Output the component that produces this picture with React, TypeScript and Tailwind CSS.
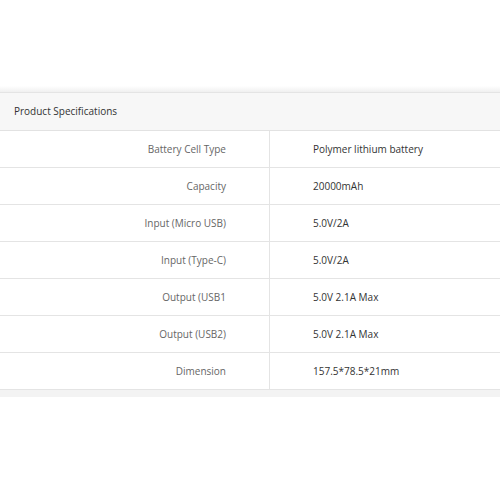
const specs = [
  { label: "Battery Cell Type", value: "Polymer lithium battery" },
  { label: "Capacity", value: "20000mAh" },
  { label: "Input (Micro USB)", value: "5.0V/2A" },
  { label: "Input (Type-C)", value: "5.0V/2A" },
  { label: "Output (USB1", value: "5.0V 2.1A Max" },
  { label: "Output (USB2)", value: "5.0V 2.1A Max" },
  { label: "Dimension", value: "157.5*78.5*21mm" },
];

export default function App() {
  return (
    <div className="w-[500px] h-[500px] bg-white pt-[86px] font-['Open_Sans',sans-serif] text-[10px]">
      <div className="h-[6px] bg-gradient-to-b from-white to-[#f0f0f0]" />
      <div className="border-t border-[#e4e4e4] bg-[#f7f7f7] h-[38px] flex items-center pl-[14px] text-[#333]">
        Product Specifications
      </div>
      <div className="border-t border-[#e2e2e2]">
        {specs.map((s) => (
          <div key={s.label} className="flex h-[37px] border-b border-[#e4e4e4]">
            <div className="w-[270px] border-r border-[#e4e4e4] flex items-center justify-end pr-[43px] text-[#666]">
              {s.label}
            </div>
            <div className="flex-1 flex items-center pl-[43px] text-[#333]">{s.value}</div>
          </div>
        ))}
      </div>
      <div className="h-[7px] bg-[#f3f3f3]" />
    </div>
  );
}
